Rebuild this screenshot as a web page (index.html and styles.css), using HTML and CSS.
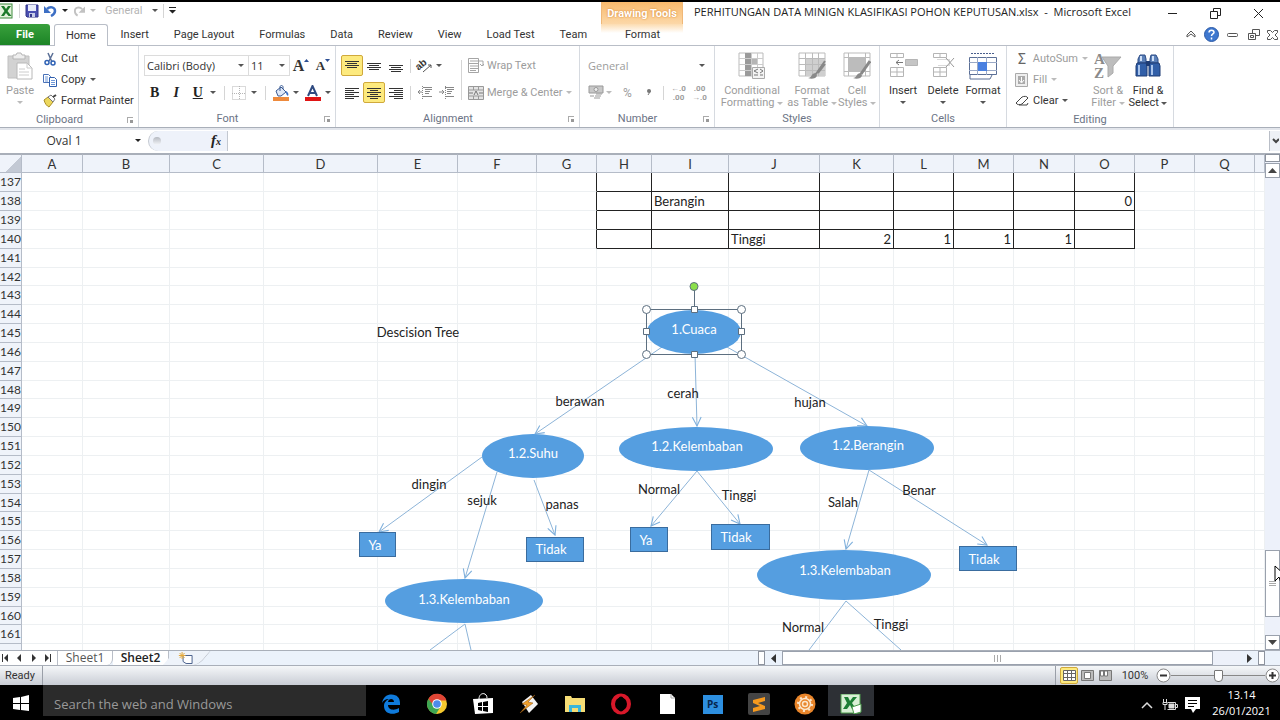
FILE: index.html
```html
<!DOCTYPE html>
<html lang="en">

<head>
    <meta charset="utf-8">
    <title>PERHITUNGAN DATA MINIGN KLASIFIKASI POHON KEPUTUSAN.xlsx - Microsoft Excel</title>
    <link rel="stylesheet" href="styles.css">
</head>

<body>
    <!-- title bar -->
    <header class="titlebar">
        <div class="qat">
            <svg class="logo" width="14" height="16" viewBox="0 0 14 16"><rect x="-3" y="1" width="15" height="14" fill="#e4f2dc" stroke="#3c8a3c"/><path d="M1 3h3l2 3 2-3h3L7.500 8l4 5h-3L6 10l-2 3H1l3.500-5z" fill="#1d7a2a"/></svg>
            <span class="sep"></span>
            <button aria-label="Save"><svg width="14" height="14" viewBox="0 0 14 14"><path d="M1 1h12v12H2L1 12z" fill="#4a4fb0" stroke="#33378a"/><path d="M3 1h8v6H3z" fill="#e8ecfa"/><path d="M4 9h6v4H4z" fill="#c6cce8"/><path d="M5 10h2v3H5z" fill="#33378a"/></svg></button>
            <button aria-label="Undo"><svg width="13" height="12" viewBox="0 0 13 12"><path d="M3 4c3-3 8-2 8 2 0 3-2 4-4 5" fill="none" stroke="#3d6fc4" stroke-width="2.500"/><path d="M0 1v7h7z" fill="#3d6fc4"/></svg></button>
            <i class="arrow dark"></i>
            <button aria-label="Redo"><svg width="12" height="12" viewBox="0 0 13 12"><path d="M10 4C7 1 2 2 2 6c0 3 1 4 3 5" fill="none" stroke="#c2c2c2" stroke-width="2"/><path d="M13 1v7H6z" fill="#c2c2c2"/></svg></button>
            <i class="arrow pale"></i>
            <span class="qat-format">General</span>
            <i class="arrow"></i>
            <span class="sep"></span>
            <button aria-label="Customize Quick Access Toolbar"><svg width="7" height="7" viewBox="0 0 7 7"><path d="M0 0h7v1H0zM0 3h7L3.500 6.500z" fill="#222"/></svg></button>
        </div>
        <div class="context">Drawing Tools</div>
        <h1 class="title">PERHITUNGAN DATA MINIGN KLASIFIKASI POHON KEPUTUSAN.xlsx&nbsp; -&nbsp; Microsoft Excel</h1>
        <div class="win">
            <button aria-label="Minimize"><svg width="11" height="11"><path d="M1 5.500h9" stroke="#222"/></svg></button>
            <button aria-label="Restore"><svg width="11" height="11" fill="none" stroke="#222"><path d="M.5 3.500h7v7h-7zM3.500 3V.5h7v7H8"/></svg></button>
            <button aria-label="Close"><svg width="11" height="11"><path d="M1 1l9 9M10 1l-9 9" stroke="#222"/></svg></button>
        </div>
    </header>

    <nav class="tabs">
        <div class="tab-list">
            <button class="file">File</button>
            <button class="tab active">Home</button>
            <button class="tab">Insert</button>
            <button class="tab">Page Layout</button>
            <button class="tab">Formulas</button>
            <button class="tab">Data</button>
            <button class="tab">Review</button>
            <button class="tab">View</button>
            <button class="tab">Load Test</button>
            <button class="tab">Team</button>
        </div>
        <button class="tab format">Format</button>
        <div class="doc-win">
            <button aria-label="Minimize the Ribbon"><svg width="10" height="9" fill="none" stroke="#555"><path d="M1 5l4-4 4 4v2L5 4 1 7z"/></svg></button>
            <button aria-label="Help"><svg width="15" height="15"><circle cx="7.500" cy="7.500" r="7" fill="#3f78cf" stroke="#2c5aa6"/><path d="M5 5.500c0-3 5-3 5 0 0 1.500-2.500 1.500-2.500 3.500M7.500 10.500v2" fill="none" stroke="#fff" stroke-width="1.500"/></svg></button>
            <button aria-label="Minimize Window"><svg width="11" height="9"><rect x=".5" y="3.500" width="10" height="3" rx="1" fill="none" stroke="#555"/></svg></button>
            <button aria-label="Restore Window"><svg width="12" height="11" fill="none" stroke="#555"><path d="M.5 4.500h7v6h-7zM4.500 4V.5h7v6H8M2.500 6.500h3v2h-3z"/></svg></button>
            <button aria-label="Close Window"><svg width="11" height="10" fill="none" stroke="#555"><path d="M.5.5h3l2 2 2-2h3v2L8 5l2.500 2.500v2h-3l-2-2-2 2h-3v-2L3 5 .5 2.500z"/></svg></button>
        </div>
    </nav>

    <!-- ribbon -->
    <section class="ribbon">
        <div class="group clipboard">
            <div class="body">
                <button class="big off">
                    <svg width="26" height="28" viewBox="0 0 26 28"><path d="M1 4h21v22H1z" fill="#d2d2d2" stroke="#c0c0c0"/><path d="M6 3h3l1-2h4l1 2h3v4H6z" fill="#eee" stroke="#b5b5b5"/><path d="M10 11h10l5 5v11H10z" fill="#fff" stroke="#b8b8b8"/><path d="M20 11v5h5M12 17h6M12 20h10M12 23h10" fill="none" stroke="#ccc"/></svg>
                    <span>Paste</span><i class="arrow pale"></i>
                </button>
                <div class="stack">
                    <button class="small"><svg width="14" height="14" viewBox="0 0 14 14"><path d="M5 1l4 9M10 1L6 9" stroke="#5a6f96" stroke-width="1.500" fill="none"/><g fill="none" stroke="#2f62b5" stroke-width="1.500"><circle cx="4" cy="10.500" r="2"/><circle cx="10" cy="11" r="2"/></g></svg>Cut</button>
                    <button class="small"><svg width="14" height="14" viewBox="0 0 14 14"><path d="M.5 1.500h5l2 2v6h-7z" fill="#fff" stroke="#4a72b8"/><path d="M2 4h3M2 6h3M2 8h3" stroke="#6f98d8"/><path d="M6.500 4.500h5l2 2v7h-7z" fill="#fff" stroke="#2f5fae"/><path d="M8 7.500h4M8 9.500h4M8 11.500h4" stroke="#6f98d8"/></svg>Copy <i class="arrow"></i></button>
                    <button class="small"><svg width="14" height="14" viewBox="0 0 14 14"><path d="M1 6l4-3 5 5-4 5C4 12 2 10 1 6z" fill="#ecd75c" stroke="#a98d25"/><path d="M5 3l3-2 4 4-2 3z" fill="#fbfbfb" stroke="#777"/><path d="M10 3l3-2" stroke="#444" stroke-width="2"/></svg>Format Painter</button>
                </div>
            </div>
            <div class="caption with-launch">Clipboard<i class="launch"></i></div>
        </div>

        <div class="group font">
            <div class="body rows">
                <div class="line">
                    <label class="combo family"><select aria-label="Font"><option>Calibri (Body)</option></select></label>
                    <label class="combo size"><select aria-label="Font Size"><option>11</option></select></label>
                    <button class="tool grow" aria-label="Grow Font"><b>A</b><svg width="5" height="4"><path d="M0 3h5L2.500 0z" fill="#2c4f94"/></svg></button>
                    <button class="tool grow shrink" aria-label="Shrink Font"><b>A</b><svg width="5" height="4"><path d="M0 0h5L2.500 3z" fill="#2c4f94"/></svg></button>
                </div>
                <div class="line">
                    <button class="tool glyph"><b>B</b></button>
                    <button class="tool glyph"><em>I</em></button>
                    <button class="tool glyph"><u>U</u></button>
                    <i class="arrow"></i><span class="sep"></span>
                    <button class="tool" aria-label="Borders"><svg width="14" height="14" fill="none" stroke="#b5b5b5" stroke-dasharray="1 1"><path d="M.5.5h13v13H.5zM7.500 0v14M0 7.500h14"/></svg></button>
                    <i class="arrow"></i><span class="sep"></span>
                    <button class="tool" aria-label="Fill Color"><svg width="16" height="16" viewBox="0 0 16 16"><path d="M3 6l5-4 5 5-5 4H5z" fill="#dfe9f8" stroke="#3a5a93"/><path d="M7 6V2c0-2 3-2 3 0v2" fill="none" stroke="#3a5a93"/><path d="M13 6c2 1 3 3 2 5-2-1-2-3-2-5z" fill="#3b71c9"/><path d="M0 12h16v4H0z" fill="#ee8a3c"/></svg></button>
                    <i class="arrow"></i>
                    <button class="tool" aria-label="Font Color"><svg width="16" height="16" viewBox="0 0 16 16"><path d="M3 11L7.500 1 12 11M5 8h5" stroke="#2f4a80" stroke-width="2" fill="none"/><path d="M0 12h16v4H0z" fill="#e01414"/></svg></button>
                    <i class="arrow"></i>
                </div>
            </div>
            <div class="caption with-launch">Font<i class="launch"></i></div>
        </div>

        <div class="group align">
            <div class="body">
                <div class="rows">
                    <div class="line">
                        <button class="tool on" aria-label="Top Align"><svg width="14" height="14" stroke="#333"><path d="M0 2.500h14M2 4.500h10M0 6.500h14M2 8.500h10"/></svg></button>
                        <button class="tool" aria-label="Middle Align"><svg width="14" height="14" stroke="#333"><path d="M0 4.500h14M2 6.500h10M0 8.500h14M2 10.500h10"/></svg></button>
                        <button class="tool" aria-label="Bottom Align"><svg width="14" height="14" stroke="#333"><path d="M0 6.500h14M2 8.500h10M0 10.500h14M2 12.500h10"/></svg></button>
                        <span class="sep"></span>
                        <button class="tool" aria-label="Orientation"><svg class="orient" width="18" height="15" viewBox="0 0 18 15"><text x="0" y="10" transform="rotate(-40 5 8)" class="ab">ab</text><path d="M7 14l8-7M15 7v3M15 7h-3" stroke="#555" fill="none"/></svg></button>
                        <i class="arrow"></i>
                    </div>
                    <div class="line">
                        <button class="tool" aria-label="Align Left"><svg width="14" height="14" stroke="#333"><path d="M0 2.500h14M0 4.500h9M0 6.500h14M0 8.500h9M0 10.500h14M0 12.500h9"/></svg></button>
                        <button class="tool on" aria-label="Center"><svg width="14" height="14" stroke="#333"><path d="M0 2.500h14M3 4.500h8M0 6.500h14M3 8.500h8M0 10.500h14M3 12.500h8"/></svg></button>
                        <button class="tool" aria-label="Align Right"><svg width="14" height="14" stroke="#333"><path d="M0 2.500h14M5 4.500h9M0 6.500h14M5 8.500h9M0 10.500h14M5 12.500h9"/></svg></button>
                        <span class="sep"></span>
                        <button class="tool" aria-label="Decrease Indent"><svg width="16" height="13" stroke="#888" fill="none"><path d="M6 1.500h9M8 3.500h7M8 5.500h5M8 7.500h4M6 10.500h9M5 6H1M3 4L1 6l2 2"/><path d="M5.500 0v13" stroke-dasharray="1 1"/></svg></button>
                        <button class="tool" aria-label="Increase Indent"><svg width="16" height="13" stroke="#888" fill="none"><path d="M6 1.500h9M8 3.500h7M8 5.500h5M8 7.500h4M6 10.500h9M0 6h5M3 4l2 2-2 2"/><path d="M6.500 0v13" stroke-dasharray="1 1"/></svg></button>
                    </div>
                </div>
                <span class="sep tall"></span>
                <div class="rows text">
                    <button class="small off"><svg width="16" height="15" fill="none" stroke="#a5a5a5"><path d="M.5.5h10v14H.5zM0 5.500h11M2 3h13M2 8h8M2 10.500h8M2 12.500h6M15 3v5M12 6l2 2 2-2"/></svg>Wrap Text</button>
                    <button class="small off"><svg width="16" height="14"><path d="M.5.5h15v13H.5zM0 4h16M0 10h16M5.500 0v4M10.500 0v4M5.500 10v4M10.500 10v4" fill="#e4e4e4" stroke="#999"/><path d="M1 7h4M11 7h4M6 9l2-4 2 4" fill="none" stroke="#777"/></svg>Merge &amp; Center <i class="arrow pale"></i></button>
                </div>
            </div>
            <div class="caption with-launch">Alignment<i class="launch"></i></div>
        </div>

        <div class="group number">
            <div class="body rows">
                <label class="combo plain"><select aria-label="Number Format"><option>General</option></select></label>
                <div class="line off">
                    <button class="tool" aria-label="Accounting Format"><svg width="16" height="15"><path d="M1 1h14v7H1z" fill="#c8c8c8" stroke="#999"/><circle cx="8" cy="4.500" r="2" fill="#eee" stroke="#999"/><path d="M8 9h6M7 11h6M6 13h6M2 11h4" stroke="#999"/></svg></button>
                    <i class="arrow pale"></i>
                    <button class="tool percent-style">%</button>
                    <button class="tool" aria-label="Comma Style"><svg width="4" height="7"><circle cx="2" cy="2" r="2" fill="#777"/><path d="M3.500 2L1 6" stroke="#777"/></svg></button>
                    <span class="sep"></span>
                    <button class="tool decimal"><span>←.0</span><span>.00</span></button>
                    <button class="tool decimal"><span>.00</span><span>→.0</span></button>
                </div>
            </div>
            <div class="caption with-launch">Number<i class="launch"></i></div>
        </div>

        <div class="group styles">
            <div class="body">
                <button class="big off cond">
                    <svg width="28" height="28"><path d="M1 1h24v23H1z" fill="#fff" stroke="#bbb"/><path d="M7 1h6v23H7z" fill="#9a9a9a"/><path d="M13 6h6v6h-6z" fill="#b5b5b5"/><path d="M1 6.500h24M1 12.500h24M1 18.500h24M13.500 1v23M19.500 1v23" stroke="#ccc"/><path d="M14.500 15.500h12v11h-12z" fill="#f4f4f4" stroke="#aaa"/><path d="M20 17l-4 2 4 2M16 23h4M22 17l3 2-3 2M22 23h3" fill="none" stroke="#777"/></svg>
                    <span>Conditional<br>Formatting <i class="arrow pale"></i></span>
                </button>
                <button class="big off">
                    <svg width="28" height="28"><path d="M1 1h26v23H1z" fill="#fff" stroke="#bbb"/><path d="M7 7h20v17H7z" fill="#cfcfcf"/><path d="M1 6.500h26M1 12.500h26M1 18.500h26M7.500 1v23M14.500 1v23M20.500 1v23" stroke="#bbb"/><path d="M27 9l-9 13M27 12l-7 9" stroke="#888" stroke-width="2"/><path d="M10 26c4 0 3-5 8-5 3 4-2 7-8 5z" fill="#8a8a8a"/></svg>
                    <span>Format<br>as Table <i class="arrow pale"></i></span>
                </button>
                <button class="big off cell">
                    <svg width="28" height="28"><path d="M1 1h26v23H1z" fill="#fff" stroke="#bbb"/><path d="M6 6h16v13H6z" fill="#bcbcbc"/><path d="M1 5.500h26M1 19.500h26M5.500 1v23M22.500 1v23" stroke="#bbb"/><path d="M27 9l-9 13" stroke="#888" stroke-width="3"/><path d="M10 26c4 0 3-5 8-5 3 4-2 7-8 5z" fill="#8a8a8a"/></svg>
                    <span>Cell<br>Styles <i class="arrow pale"></i></span>
                </button>
            </div>
            <div class="caption">Styles</div>
        </div>

        <div class="group cells">
            <div class="body">
                <button class="big"><svg width="30" height="28" fill="none" stroke="#b5b5b5"><path d="M2.500 1.500h13v4h-13zM9 1v5M2.500 15.500h13v9h-13zM2 20h14M9 15v10"/><path d="M17.500 7.500h12v6h-12z" fill="#c5c5c5"/><path d="M15 10.500H8M11 8l-3 2.500 3 2.500" stroke="#777"/></svg><span>Insert</span><i class="arrow"></i></button>
                <button class="big"><svg width="30" height="28" fill="none" stroke="#b5b5b5"><path d="M5.500 1.500h13v4h-13zM12 1v5M5.500 15.500h13v9h-13zM5 20h14M12 15v10"/><path d="M9.500 7.500h12v6h-12" stroke-dasharray="1 1"/><path d="M18 6l8 9M26 6l-8 9" stroke="#999"/></svg><span>Delete</span><i class="arrow"></i></button>
                <button class="big"><svg width="30" height="28" fill="none"><path d="M1.500 5.500h27v17h-27z" fill="#fff" stroke="#5b6f96"/><path d="M1 10.500h28M1 18.500h28M9.500 5v18M18.500 5v18" stroke="#9aa9c6"/><path d="M10 10h9v9h-9z" fill="#4a80e0"/><path d="M2 23v4h20l2-4" stroke="#5b6f96"/><path d="M3 1.500h6M9 1.500h12M21 1.500h6" stroke="#4a5f8d" stroke-dasharray="2 1"/></svg><span>Format</span><i class="arrow"></i></button>
            </div>
            <div class="caption">Cells</div>
        </div>

        <div class="group editing">
            <div class="body">
                <div class="stack">
                    <button class="small off"><span class="sigma">Σ</span>AutoSum <i class="arrow pale"></i></button>
                    <button class="small off"><svg width="14" height="14"><path d="M.5.5h12v13H.5z" fill="#eee" stroke="#aaa"/><path d="M3 3h7v8H3z" fill="#aaa"/><path d="M6.500 4v5M4 7l2.500 3L9 7" fill="none" stroke="#fff"/></svg>Fill <i class="arrow pale"></i></button>
                    <button class="small"><svg width="14" height="14"><path d="M1 9l6-6c2-1 5-1 6 1l-6 6c-2 1-5 1-6-1zM4 11h8l1-2" fill="#fff" stroke="#444"/></svg>Clear <i class="arrow"></i></button>
                </div>
                <button class="big off"><svg width="28" height="28"><text x="0" y="12" class="az">A</text><text x="0" y="26" class="az">Z</text><path d="M8 5h19l-8 9v7l-5 4V14z" fill="#bdbdbd" stroke="#aaa"/></svg><span>Sort &amp;<br>Filter <i class="arrow pale"></i></span></button>
                <button class="big"><svg width="28" height="28"><path d="M6 3h5l1 4v4H4V7zM17 3h5l2 4v4h-8V7z" fill="#5b80b8" stroke="#2a4a85"/><path d="M3 11h9l1 2v11H2V14zM16 11h9l1 3v10H15V13z" fill="#315fa8" stroke="#1e3c74"/><path d="M12 9h4v5h-4z" fill="#1e3c74"/><path d="M5 13v10M18 13v10" stroke="#a9c4ec" stroke-width="2"/><path d="M7 4v5M19 4v5" stroke="#cfe0f8" stroke-width="2"/></svg><span>Find &amp;<br>Select <i class="arrow"></i></span></button>
            </div>
            <div class="caption">Editing</div>
        </div>
    </section>

    <!-- formula bar -->
    <section class="formula">
        <input class="name-box" aria-label="Name Box" value="Oval 1">
        <i class="arrow dark"></i>
        <div class="fx"><i class="knob"></i><em>f<small>x</small></em></div>
        <input class="formula-input" aria-label="Formula">
        <button class="expand" aria-label="Expand Formula Bar"><svg width="7" height="6"><path d="M1 1l3 3 3-3" fill="none" stroke="#444" stroke-width="2"/></svg></button>
    </section>

    <!-- worksheet -->
    <main class="sheet">
        <div class="view">
            <table class="grid">
                <colgroup>
                    <col class="c-row"><col class="c-a"><col class="c-b"><col class="c-c"><col class="c-d"><col class="c-e"><col class="c-f"><col class="c-g"><col class="c-h"><col class="c-i"><col class="c-j"><col class="c-k"><col class="c-l"><col class="c-m"><col class="c-n"><col class="c-o"><col class="c-p"><col class="c-q"><col>
                </colgroup>
                <thead>
                    <tr><th class="corner"></th><th>A</th><th>B</th><th>C</th><th>D</th><th>E</th><th>F</th><th>G</th><th>H</th><th>I</th><th>J</th><th>K</th><th>L</th><th>M</th><th>N</th><th>O</th><th>P</th><th>Q</th><th></th></tr>
                </thead>
                <tbody id="rows"></tbody>
            </table>

            <!-- decision tree shapes -->
            <svg class="tree" viewBox="0 154 1265 496">
                <defs>
                    <marker id="open" viewBox="0 0 10 10" refX="9" refY="5" markerWidth="11" markerHeight="11" markerUnits="userSpaceOnUse" orient="auto"><path d="M1 1l8 4-8 4" fill="none" stroke="#7fb0dc" stroke-width="1"/></marker>
                </defs>
                <g class="link">
                    <path d="M662 347L535 434"/>
                    <path d="M695 354L697 426"/>
                    <path d="M727 347L867 426"/>
                    <path d="M482 457L379 532"/>
                    <path d="M497 472L465 578"/>
                    <path d="M534 480L555 535"/>
                    <path d="M697 471L651 526"/>
                    <path d="M697 471L740 524"/>
                    <path d="M869 470L846 549"/>
                    <path d="M869 470L987 545"/>
                </g>
                <g class="link cut">
                    <path d="M465 624L430 650"/>
                    <path d="M465 624L471 650"/>
                    <path d="M846 601L809 650"/>
                    <path d="M846 601L901 650"/>
                </g>
                <g class="node">
                    <ellipse cx="694" cy="332" rx="47" ry="22"/>
                    <ellipse cx="533" cy="456" rx="51" ry="22"/>
                    <ellipse cx="696" cy="449" rx="77" ry="22"/>
                    <ellipse cx="867" cy="448" rx="67" ry="22"/>
                    <ellipse cx="464" cy="601" rx="79" ry="22"/>
                    <ellipse cx="844" cy="575" rx="87" ry="25"/>
                </g>
                <g class="leaf">
                    <rect x="359.500" y="532.500" width="36" height="24"/>
                    <rect x="526.500" y="537.500" width="57" height="24"/>
                    <rect x="630.500" y="527.500" width="37" height="24"/>
                    <rect x="711.500" y="524.500" width="58" height="25"/>
                    <rect x="959.500" y="546.500" width="57" height="24"/>
                </g>
                <g class="node-text">
                    <text x="694" y="334">1.Cuaca</text>
                    <text x="533" y="458">1.2.Suhu</text>
                    <text x="697" y="451">1.2.Kelembaban</text>
                    <text x="868" y="450">1.2.Berangin</text>
                    <text x="464" y="604">1.3.Kelembaban</text>
                    <text x="845" y="575">1.3.Kelembaban</text>
                    <text x="375" y="550">Ya</text>
                    <text x="551" y="554">Tidak</text>
                    <text x="646" y="545">Ya</text>
                    <text x="736" y="542">Tidak</text>
                    <text x="984" y="564">Tidak</text>
                </g>
                <g class="edge-text">
                    <text x="418" y="337">Descision Tree</text>
                    <text x="580" y="406">berawan</text>
                    <text x="683" y="398">cerah</text>
                    <text x="810" y="407">hujan</text>
                    <text x="429" y="489">dingin</text>
                    <text x="482" y="505">sejuk</text>
                    <text x="562" y="509">panas</text>
                    <text x="659" y="494">Normal</text>
                    <text x="739" y="500">Tinggi</text>
                    <text x="843" y="507">Salah</text>
                    <text x="919" y="495">Benar</text>
                    <text x="803" y="632">Normal</text>
                    <text x="891" y="629">Tinggi</text>
                </g>
                <g class="handles">
                    <path d="M694.500 286V309M646.500 309.500h95v45h-95z" fill="none"/>
                    <circle cx="694" cy="286.500" r="4" fill="#8be04a"/>
                    <circle cx="646.500" cy="309.500" r="4"/><circle cx="741.500" cy="309.500" r="4"/><circle cx="646.500" cy="354.500" r="4"/><circle cx="741.500" cy="354.500" r="4"/>
                    <path d="M691.500 306.500h6v6h-6zM691.500 351.500h6v6h-6zM643.500 328.500h6v6h-6zM738.500 328.500h6v6h-6z"/>
                </g>
            </svg>
        </div>

        <div class="vscroll">
            <button class="split" aria-label="Split"></button>
            <button class="step" aria-label="Scroll up"><svg width="9" height="5"><path d="M0 5h9L4.500 0z" fill="#444"/></svg></button>
            <div class="track">
                <div class="thumb"></div>
                <svg class="pointer" width="14" height="20" viewBox="0 0 14 20"><path d="M1 1v15l4-4 2 6 3-1-3-6h5z" fill="#fff" stroke="#000"/></svg>
            </div>
            <button class="step" aria-label="Scroll down"><svg width="9" height="5"><path d="M0 0h9L4.500 5z" fill="#444"/></svg></button>
        </div>
    </main>

    <!-- sheet tabs -->
    <section class="sheet-tabs">
        <div class="nav">
            <button aria-label="First sheet"><svg width="7" height="8"><path d="M0 0h1v8H0zM6 0v8L2 4z" fill="#333"/></svg></button>
            <button aria-label="Previous sheet"><svg width="7" height="8"><path d="M5 0v8L1 4z" fill="#333"/></svg></button>
            <button aria-label="Next sheet"><svg width="7" height="8"><path d="M2 0v8l4-4z" fill="#333"/></svg></button>
            <button aria-label="Last sheet"><svg width="7" height="8"><path d="M6 0h1v8H6zM1 0v8l4-4z" fill="#333"/></svg></button>
        </div>
        <button class="sheet-tab">Sheet1</button>
        <button class="sheet-tab current">Sheet2</button>
        <button class="sheet-tab new" aria-label="Insert Worksheet"><svg width="16" height="13"><path d="M4.500 3.500h9v8h-6l-3-2z" fill="#fff" stroke="#4e648f"/><path d="M3.500 0v7M0 3.500h7M1 1l5 5M6 1L1 6" stroke="#e5a93a"/></svg></button>
        <div class="hscroll">
            <button class="split" aria-label="Resize tabs"></button>
            <button class="hstep" aria-label="Scroll left"><svg width="5" height="9"><path d="M5 0v9L0 4.500z" fill="#333"/></svg></button>
            <div class="htrack"><div class="hthumb"></div></div>
            <button class="hstep" aria-label="Scroll right"><svg width="5" height="9"><path d="M0 0v9l5-4.500z" fill="#333"/></svg></button>
            <button class="split" aria-label="Split"></button>
        </div>
    </section>

    <footer class="status">
        <span class="ready">Ready</span>
        <div class="zoom">
            <button class="view-btn on" aria-label="Normal"><svg width="13" height="11" fill="#fff" stroke="#666"><path d="M.5.5h12v10H.5zM0 3.500h13M0 7.500h13M4.500 0v11M8.500 0v11"/></svg></button>
            <button class="view-btn" aria-label="Page Layout"><svg width="13" height="11"><path d="M.5.5h12v10H.5z" fill="#bbb" stroke="#777"/><path d="M3.500 2.500h6v6h-6z" fill="#fff" stroke="#777"/></svg></button>
            <button class="view-btn" aria-label="Page Break Preview"><svg width="13" height="11"><path d="M.5.5h12v10H.5z" fill="#bbb" stroke="#777"/><path d="M1.500 1h3v5h-3zM5.500 1h3v5h-3z" fill="#fff" stroke="#777"/></svg></button>
            <span class="percent">100%</span>
            <button class="round" aria-label="Zoom out"><svg width="15" height="15"><circle cx="7.500" cy="7.500" r="6.500" fill="#fff" stroke="#888"/><path d="M4 7.500h7" stroke="#333" stroke-width="2"/></svg></button>
            <input type="range" aria-label="Zoom" min="0" max="100" value="50">
            <button class="round" aria-label="Zoom in"><svg width="15" height="15"><circle cx="7.500" cy="7.500" r="6.500" fill="#fff" stroke="#888"/><path d="M4 7.500h7M7.500 4v7" stroke="#333" stroke-width="2"/></svg></button>
        </div>
    </footer>

    <!-- windows taskbar -->
    <footer class="taskbar">
        <button class="start" aria-label="Start"><svg width="17" height="17" fill="#fff"><path d="M0 3l7-1v6H0zM8 2l8-2v8H8zM0 9h7v6l-7-1zM8 9h8v7l-8-1z"/></svg></button>
        <input class="search" aria-label="Search" placeholder="Search the web and Windows">
        <div class="apps">
            <button aria-label="Edge"><svg width="20" height="20" viewBox="0 0 20 20"><path d="M1 9C2 3 6 .5 10.500.5 16 .5 19 4 19 9v2H7c0 5 6 6 11 3v4c-6 3.500-15 2-15-6 0-4 3-6 5-7C4 5 2 7 1 9zm6-1h6c0-4-5.500-4-6 0z" fill="#0f7bdc" fill-rule="evenodd"/></svg></button>
            <button aria-label="Chrome"><svg width="22" height="22" viewBox="0 0 22 22"><circle cx="11" cy="11" r="10" fill="#f5c92e"/><path d="M2.300 6A10 10 0 0 1 20.500 7.500H11L7 13z" fill="#df4535"/><path d="M2.300 6A10 10 0 0 0 10 21l5-8-7 0z" fill="#3da653"/><circle cx="11" cy="11" r="4.800" fill="#fff"/><circle cx="11" cy="11" r="3.800" fill="#4d8bea"/></svg></button>
            <button aria-label="Store"><svg width="20" height="22" viewBox="0 0 20 22"><path d="M0 6l20-1v15L2 21z" fill="#fff"/><path d="M6 6c0-7 8-7 8-1" fill="none" stroke="#fff"/><path d="M5 10l4-1v4H5zM10 9l5-1v5h-5zM5 14h4v4l-4-1zM10 14h5v5l-5-1z" fill="#000"/></svg></button>
            <button aria-label="Winamp"><svg width="20" height="20" viewBox="0 0 20 20"><path d="M3 8l9-7 7 9-9 9z" fill="#f4f4f4"/><path d="M16 1L3 10l5 1-7 8 13-10-5-1z" fill="#f0a02c" stroke="#8c5010" stroke-width=".5"/></svg></button>
            <button aria-label="File Explorer"><svg width="20" height="18" viewBox="0 0 20 18"><path d="M0 1h6l1 2h13v14H0z" fill="#f6dd76"/><path d="M4 10h12v7h-3v-4H7v4H4z" fill="#38b6dd"/></svg></button>
            <button aria-label="Opera"><svg width="22" height="22"><ellipse cx="11" cy="11" rx="8" ry="8.500" fill="none" stroke="#d8182a" stroke-width="4"/><ellipse cx="11" cy="11" rx="4" ry="7.500" fill="#000"/></svg></button>
            <button aria-label="Document"><svg width="15" height="20"><path d="M0 0h11l4 4v16H0z" fill="#fff"/><path d="M11 0v4h4" fill="none" stroke="#aaa"/></svg></button>
            <button aria-label="Photoshop"><svg width="20" height="19"><path d="M0 0h20v19H0z" fill="#2d8fe0"/><text x="4" y="13" class="ps">Ps</text></svg></button>
            <button aria-label="Sublime Text"><svg width="22" height="22"><rect width="22" height="22" rx="2" fill="#444"/><path d="M17 4v4l-7 2 7 3v3L5 19v-4l7-2-7-3V7z" fill="#f79a1e"/></svg></button>
            <button aria-label="Settings tool"><svg width="22" height="22"><circle cx="11" cy="11" r="10.500" fill="#e8852a"/><circle cx="11" cy="11" r="5.500" fill="none" stroke="#fbe6cc" stroke-width="1.500"/><circle cx="11" cy="11" r="7" fill="none" stroke="#fbe6cc" stroke-width="2" stroke-dasharray="2 3.500"/><circle cx="11" cy="11" r="2.500" fill="none" stroke="#fbe6cc" stroke-width="1.500"/></svg></button>
            <button class="running" aria-label="Excel"><svg width="22" height="20"><path d="M1 0h19v19H1z" fill="#d9f0d5" stroke="#4c9c4c"/><path d="M4 3h4l2 4 3-4h4l-5 6 4 6h-4l-2-4-3 4H3l4-6z" fill="#1d7f35"/><path d="M12 13l9-3v8l-7 2z" fill="#fff" stroke="#4c9c4c"/></svg></button>
        </div>
        <div class="tray">
            <button aria-label="Show hidden icons"><svg width="12" height="8"><path d="M1 7l5-5 5 5" fill="none" stroke="#ddd" stroke-width="1.500"/></svg></button>
            <button aria-label="Battery"><svg width="16" height="12" fill="none" stroke="#ddd"><path d="M5.500 3.500h8v7h-8M14 5.500h1.500v3H14M1.500 0v3M4.500 0v3M1 3.500h4v2H1zM3 6v5"/><path d="M7 5h5v4H7z" fill="#ddd"/></svg></button>
            <button aria-label="Notifications"><svg width="15" height="16"><path d="M0 0h15v12h-4l-3 4-2-4H0z" fill="#fff"/><path d="M3 3.500h9M3 6.500h9M3 9.500h6" stroke="#000"/></svg></button>
            <time class="clock">13.14<br>26/01/2021</time>
        </div>
    </footer>

    <script src="script.js"></script>
</body>

</html>
```
FILE: script.js
```js
var columns = "ABCDEFGHIJKLMNOPQR".split("");
var cells = {
    I138: "Berangin",
    O138: 0,
    J140: "Tinggi",
    K140: 2,
    L140: 1,
    M140: 1,
    N140: 1
};

function addRow(number) {
    var row = document.querySelector("#rows").insertRow();
    var head = document.createElement("th");
    head.innerText = number;
    row.appendChild(head);
    columns.forEach(function (letter) {
        var td = row.insertCell();
        var value = cells[letter + number];
        if (value !== undefined) td.innerText = value;
        if (typeof value == "number") td.classList.add("num");
        // bordered block H137:O140
        if (number && number <= 140 && letter >= "H" && letter <= "O") td.classList.add("boxed");
        if (number && number <= 140 && letter == "G") td.classList.add("before-box");
    });
}

for (var i = 137; i <= 161; i++) {
    addRow(i);
}
// sliver of the next row above the sheet tabs
addRow("");
```
FILE: styles.css
```css
* {
    box-sizing: border-box;
}

body {
    margin: 0;
    height: 100vh;
    display: flex;
    flex-direction: column;
    overflow: hidden;
    background: #fff;
    border-top: 2px solid #000;
    font-family: Roboto, "Open Sans", sans-serif;
    font-size: 11px;
    line-height: 12px;
    color: #333;
}

button {
    margin: 0;
    padding: 0;
    border: 0;
    background: none;
    font: inherit;
    color: inherit;
    display: flex;
    align-items: center;
    justify-content: center;
}

input,
select {
    margin: 0;
    border: 0;
    background: none;
    font: inherit;
    color: inherit;
    outline: none;
    border-radius: 0;
}

svg {
    display: block;
    flex: none;
}

.arrow {
    flex: none;
    display: inline-block;
    border: 3px solid transparent;
    border-top-color: #555;
    border-bottom: 0;
    vertical-align: middle;
}

.arrow.pale {
    border-top-color: #bbb;
}

.arrow.dark {
    border-top-color: #222;
}

.sep {
    flex: none;
    width: 1px;
    height: 14px;
    background: #d5d5d5;
}

.off {
    color: #9c9c9c;
}

/* title bar */
.titlebar {
    display: flex;
    height: 22px;
    flex: none;
}

.qat {
    flex: 0 0 601px;
    height: 17px;
    display: flex;
    align-items: center;
    gap: 5px;
}

.qat-format {
    width: 46px;
    padding-left: 4px;
    color: #b5b5b5;
}

.context {
    flex: 0 0 82px;
    border: solid #f0b878;
    border-width: 0 1px;
    background: linear-gradient(#f8b96c, #fcd8a8);
    color: #fff;
    font-weight: bold;
    line-height: 24px;
    text-align: center;
    text-shadow: 0 0 2px #d07820;
    white-space: nowrap;
}

.title {
    margin: 0 0 0 11px;
    font-family: "Open Sans", sans-serif;
    font-size: 11px;
    font-weight: normal;
    line-height: 20px;
    color: #222;
    white-space: nowrap;
}

.win {
    margin-left: auto;
    display: flex;
}

.win button {
    width: 43px;
}

/* ribbon tabs */
.tabs {
    flex: none;
    display: flex;
    height: 22px;
    border-bottom: 1px solid #b9bec7;
}

.tab-list {
    flex: 0 0 601px;
    min-width: 0;
    display: flex;
}

.file {
    width: 50px;
    margin-right: 4px;
    background: linear-gradient(#39a03c, #1c8426);
    border-radius: 0 3px 0 0;
    color: #fff;
    font-weight: bold;
}

.tab {
    padding: 0 12px 0 13px;
    white-space: nowrap;
}

.tab.active {
    height: 22px;
    padding: 0 11px;
    border: 1px solid #b9bec7;
    border-bottom: 0;
    border-radius: 3px 3px 0 0;
    background: #fff;
}

.tab.format {
    width: 82px;
    background: linear-gradient(#fcdcb0, #fff 9px);
}

.doc-win {
    margin-left: auto;
    display: flex;
}

.doc-win button {
    width: 21px;
}

.doc-win button:last-child {
    width: 16px;
}

/* ribbon */
.ribbon {
    flex: none;
    display: flex;
    height: 81px;
}

.group {
    display: flex;
    flex-direction: column;
    border-right: 1px solid #d6dae0;
}

.body {
    flex: 1;
    display: flex;
}

.caption {
    position: relative;
    height: 17px;
    line-height: 18px;
    text-align: center;
    color: #6b7385;
}

.caption.with-launch {
    padding-right: 19px;
}

.launch {
    position: absolute;
    right: 5px;
    bottom: 5px;
    width: 6px;
    height: 6px;
    border: 1px solid #aaa;
    border-width: 1px 0 0 1px;
}

.launch::after {
    content: "";
    position: absolute;
    right: 0;
    bottom: 0;
    width: 3px;
    height: 3px;
    background: #999;
}

.clipboard {
    width: 139px;
}

.font {
    width: 197px;
}

.align {
    width: 244px;
}

.number {
    width: 135px;
}

.styles {
    width: 165px;
}

.cells {
    width: 127px;
}

.editing {
    width: 167px;
}

.big {
    width: 40px;
    padding-top: 6px;
    flex-direction: column;
    justify-content: flex-start;
    white-space: nowrap;
}

.big span {
    margin-top: 5px;
}

.big > .arrow {
    margin-top: 4px;
}

.stack {
    display: flex;
    flex-direction: column;
    padding: 2px 0 0 3px;
}

.small {
    height: 21px;
    gap: 4px;
    justify-content: flex-start;
    white-space: nowrap;
}

.rows {
    display: flex;
    flex-direction: column;
    gap: 6px;
    padding: 9px 0 0 5px;
}

.line {
    display: flex;
    align-items: center;
    height: 21px;
}

.tool {
    width: 22px;
    height: 21px;
}

.tool.on {
    border: 1px solid #d0a93c;
    border-radius: 2px;
    background: #fdea7e;
}

.combo {
    position: relative;
    display: block;
    height: 21px;
    border: 1px solid #dcdcdc;
}

.combo select {
    appearance: none;
    width: 100%;
    height: 100%;
    padding: 0 2px;
    font-family: "Open Sans", sans-serif;
}

.combo::after {
    content: "";
    position: absolute;
    right: 4px;
    top: 8px;
    border: 3px solid transparent;
    border-top-color: #555;
    border-bottom: 0;
}

.combo.family {
    width: 105px;
}

.combo.size {
    width: 41px;
    border-left: 0;
}

.combo.plain {
    width: 125px;
    border-color: transparent;
    color: #9c9c9c;
}

.grow {
    align-items: flex-start;
    font-family: "Liberation Serif", serif;
    font-size: 16px;
    line-height: 22px;
}

.grow svg {
    margin-top: 4px;
}

.shrink {
    font-size: 13px;
}

.glyph {
    font-family: "Liberation Serif", serif;
    font-size: 14px;
    font-weight: bold;
    color: #222;
}

.font .line .arrow {
    margin: 0 4px;
}

.font .line .sep {
    margin: 0 4px;
}

.font .line .tool + .arrow {
    margin-left: 1px;
}

.align .line .sep {
    margin: 0 3px;
}

.orient {
    overflow: visible;
}

.ab {
    font: bold 10px "Liberation Sans", sans-serif;
    fill: #333;
}

.sep.tall {
    height: 40px;
    margin: 14px 0 0 3px;
}

.align .text {
    padding-left: 6px;
}

.align .small {
    gap: 3px;
}

.number .tool {
    width: 21px;
}

.number .line .arrow {
    margin-right: 5px;
}

.percent-style {
    font-size: 12px;
}

.number .line .sep {
    margin: 0 4px;
}

.number .decimal {
    flex-direction: column;
    font-size: 8px;
    line-height: 9px;
    font-weight: bold;
}

.styles .big {
    width: 46px;
}

.styles .cond {
    width: 74px;
}

.styles .cell {
    width: 44px;
}

.cells .body {
    padding-left: 3px;
}

.editing .stack {
    width: 81px;
    padding-left: 8px;
}

.sigma {
    width: 14px;
    text-align: center;
    font-size: 14px;
    color: #666;
}

.az {
    font: bold 15px "Liberation Serif", serif;
    fill: #8a8a8a;
}

/* formula bar */
.formula {
    flex: none;
    display: flex;
    align-items: center;
    height: 27px;
    border: solid #a9afb9;
    border-width: 1px 0;
    background: #fff;
    box-shadow: inset 0 2px #e3e6ec;
}

.name-box {
    width: 135px;
    padding: 0 7px 0 0;
    text-align: center;
    font-family: "Open Sans", sans-serif;
    font-size: 12px;
}

.fx {
    flex: 0 0 80px;
    height: 20px;
    margin-left: 7px;
    padding: 0 6px 0 4px;
    display: flex;
    align-items: center;
    justify-content: space-between;
    border: 1px solid #c3c8d0;
    border-width: 0 1px;
    border-radius: 10px 0 0 10px;
    background: #eef2fa;
    font-family: "Liberation Serif", serif;
    font-size: 15px;
    font-weight: bold;
    color: #222;
}

.fx small {
    font-size: 10px;
}

.knob {
    width: 8px;
    height: 8px;
    border-radius: 4px;
    background: linear-gradient(#b5b9c0, #f4f6fa);
}

.formula-input {
    flex: 1;
    min-width: 0;
}

.expand {
    width: 11px;
    height: 20px;
    border-left: 1px solid #b9bec7;
    background: #eef1f6;
}

/* worksheet */
.sheet {
    flex: 1;
    min-height: 0;
    display: flex;
}

.view {
    position: relative;
    flex: 1;
    min-width: 0;
    overflow: hidden;
}

.grid {
    width: 100%;
    table-layout: fixed;
    border-collapse: separate;
    border-spacing: 0;
    font-family: Lato, sans-serif;
    font-size: 13px;
    line-height: 16px;
}

.grid th,
.grid td {
    height: 19px;
    padding: 0 2px;
    border: solid #edf0f2;
    border-width: 0 1px 1px 0;
    white-space: nowrap;
}

.grid th {
    font-weight: normal;
    color: #333;
    background: #eff3fa;
    border-color: #b5bcc8;
}

.grid thead th {
    height: 19px;
    border-top: 1px solid #a9afb9;
}

.grid tbody th {
    padding: 0;
    font-size: 12px;
    text-align: center;
}

/* every sixth row is a pixel shorter */
.grid tbody tr:nth-child(6n) > * {
    height: 18px;
    line-height: 15px;
}

.grid .corner {
    background: linear-gradient(135deg, #eff3fa 60%, #c3c9d4 60%);
}

.grid td {
    color: #222;
}

.grid td.num {
    text-align: right;
}

.grid td.boxed {
    border-color: #222;
}

.grid td.before-box {
    border-right-color: #222;
}

.c-row { width: 22px; }
.c-a { width: 61px; }
.c-b { width: 87px; }
.c-c { width: 94px; }
.c-d { width: 114px; }
.c-e { width: 80px; }
.c-f { width: 79px; }
.c-g { width: 60px; }
.c-h { width: 55px; }
.c-i { width: 77px; }
.c-j { width: 91px; }
.c-k { width: 74px; }
.c-l, .c-m, .c-o, .c-p, .c-q { width: 60px; }
.c-n { width: 61px; }

.tree {
    position: absolute;
    left: 0;
    top: 0;
    width: 1265px;
    height: 496px;
    font-family: Lato, sans-serif;
    font-size: 13px;
    text-anchor: middle;
}

.link path {
    stroke: #8db4d8;
    marker-end: url(#open);
}

.link.cut path {
    marker-end: none;
}

.node ellipse {
    fill: #559ee0;
}

.leaf rect {
    fill: #559ee0;
    stroke: #3a6c9e;
}

.node-text {
    fill: #fff;
}

.edge-text {
    fill: #222;
}

.handles {
    fill: #fff;
    stroke: #5d6f80;
}

/* scroll bars */
.vscroll {
    width: 15px;
    display: flex;
    flex-direction: column;
    background: #edf1fa;
}

.split {
    border: 1px solid #8d939e;
    background: #fff;
}

.vscroll .split {
    height: 8px;
    margin-bottom: 1px;
}

.step {
    height: 15px;
    border: 1px solid #9aa1ad;
    background: #fff;
}

.track {
    position: relative;
    flex: 1;
    display: flex;
    flex-direction: column;
    justify-content: flex-end;
}

.thumb {
    height: 67px;
    margin-bottom: 18px;
    border: 1px solid #9aa1ad;
    background: repeating-linear-gradient(#aaa 0 1px, #fff 1px 2px) center / 7px 6px no-repeat, #fff;
}

.pointer {
    position: absolute;
    left: 9px;
    bottom: 50px;
}

.sheet-tabs {
    flex: none;
    display: flex;
    height: 16px;
    border: solid #a9afb9;
    border-width: 1px 0;
    background: #ebf2fb;
}

.nav {
    display: flex;
    width: 57px;
    padding-left: 2px;
    gap: 7px;
    background: #fff;
}

.sheet-tab {
    width: 56px;
    border-right: 1px solid #b9bec7;
    border-radius: 0 0 6px 0;
    background: #fff;
    font-family: "Open Sans", sans-serif;
    font-size: 12px;
    color: #555;
}

.sheet-tab:first-of-type {
    border-left: 1px solid #b9bec7;
}

.sheet-tab.current {
    color: #222;
    font-weight: 600;
}

.sheet-tab.new {
    width: 36px;
    background: #eef3fa;
    transform: skewX(-40deg);
}

.sheet-tab.new svg {
    transform: skewX(40deg);
}

.hscroll {
    width: 507px;
    margin: 0 15px 0 auto;
    display: flex;
}

.hscroll .split {
    width: 7px;
}

.hstep {
    width: 17px;
}

.htrack {
    flex: 1;
    background: #edf1fa;
}

.hthumb {
    width: 94%;
    height: 14px;
    border: 1px solid #9aa1ad;
    background: repeating-linear-gradient(90deg, #aaa 0 1px, #fff 1px 3px) center / 7px 7px no-repeat, #fff;
}

/* status bar */
.status {
    flex: none;
    display: flex;
    height: 19px;
    background: linear-gradient(#f5f7f9, #c9cdd5);
    line-height: 19px;
}

.ready {
    width: 43px;
    padding-left: 5px;
    border-right: 1px solid #9a9fa8;
}

.zoom {
    margin-left: auto;
    display: flex;
    align-items: center;
    padding-left: 4px;
    border-left: 1px solid #9a9fa8;
}

.view-btn {
    width: 18px;
    height: 17px;
}

.view-btn.on {
    border: 1px solid #d0a93c;
    border-radius: 2px;
    background: #fdea7e;
}

.percent {
    width: 42px;
    text-align: center;
}

.zoom input {
    appearance: none;
    width: 94px;
    height: 16px;
    background: linear-gradient(#888, #888) center / 100% 1px no-repeat;
}

.zoom input::-webkit-slider-thumb {
    appearance: none;
    width: 9px;
    height: 12px;
    border: 1px solid #777;
    border-radius: 1px 1px 4px 4px;
    background: #fff;
}

/* taskbar */
.taskbar {
    flex: none;
    display: flex;
    height: 35px;
    padding-bottom: 4px;
    background: #000;
    color: #fff;
    font-family: "Open Sans", sans-serif;
}

.start {
    width: 43px;
    padding: 6px 0 0;
}

.search {
    width: 323px;
    padding: 7px 11px 0;
    background: #2b2b2b;
    font-size: 13px;
}

.search::placeholder {
    color: #999;
    opacity: 1;
}

.apps {
    display: flex;
    margin-left: 2px;
}

.apps button {
    width: 46px;
    padding-top: 7px;
}

.apps .running {
    background: #2d3035;
}

.ps {
    font: bold 10px "Open Sans", sans-serif;
    fill: #06264d;
}

.tray {
    margin-left: auto;
    padding-top: 4px;
    display: flex;
    align-items: center;
}

.tray button {
    width: 23px;
    padding-top: 4px;
}

.clock {
    width: 75px;
    margin-right: 1px;
    line-height: 16px;
    text-align: center;
}
```
